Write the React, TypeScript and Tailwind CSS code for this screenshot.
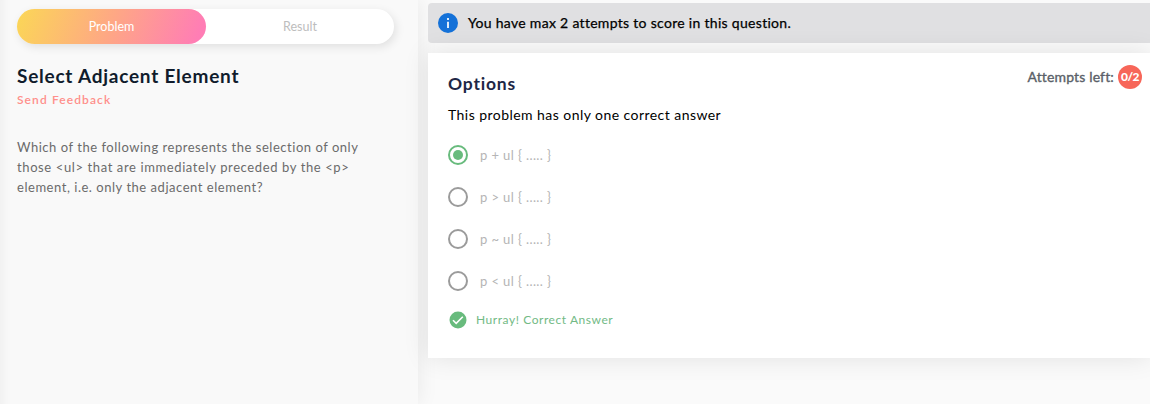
const options = ['p + ul { ..... }', 'p > ul { ..... }', 'p ~ ul { ..... }', 'p < ul { ..... }'];

function Radio({ checked }: { checked: boolean }) {
  return (
    <span
      className={`flex size-5 shrink-0 items-center justify-center rounded-full border-2 ${
        checked ? 'border-[#68bb7d]' : 'border-[#9b9b9b]'
      }`}
    >
      {checked && <span className="size-[10px] rounded-full bg-[#68bb7d]" />}
    </span>
  );
}

function ProblemPanel() {
  return (
    <section className="w-[418px] shrink-0 bg-[#f9f9f9] pl-[17px] pt-[9px] shadow-[0_0_20px_rgba(0,0,0,0.08),inset_14px_0_12px_-12px_rgba(0,0,0,0.05)]">
      <div className="flex h-[35px] w-[377px] rounded-full bg-white text-[12.5px] shadow-[2px_3px_10px_rgba(0,0,0,0.1)]">
        <button className="w-[189px] rounded-full bg-[linear-gradient(110deg,#fbd756_0%,#fea785_50%,#ff7db5_95%)] pt-[2px] text-white">
          Problem
        </button>
        <button className="w-[188px] pt-[2px] text-[#bdbdbd]">Result</button>
      </div>
      <h1 className="mt-5 text-[19px] leading-6 font-bold tracking-[0.76px] whitespace-nowrap text-[#101c2c]">
        Select Adjacent Element
      </h1>
      <a className="mt-[3px] block w-fit text-[12px] leading-[18px] font-semibold tracking-[1.1px] text-[#ff8f8b]">Send Feedback</a>
      <p className="mt-[28px] text-[13px] leading-5 tracking-[0.53px] whitespace-nowrap text-[#6b6b6b]">
        Which of the following represents the selection of only
        <br />
        <span className="tracking-[0.61px]">those &lt;ul&gt; that are immediately preceded by the &lt;p&gt;</span>
        <br />
        element, i.e. only the adjacent element?
      </p>
    </section>
  );
}

export default function App() {
  return (
    <main className="flex h-[404px] w-[1150px] overflow-hidden bg-[#fafafa] font-['Lato',sans-serif]">
      <ProblemPanel />
      <section className="min-w-0 flex-1 pl-[10px] pt-[3px]">
        <div className="flex h-10 items-center rounded-l-[4px] bg-[#e0e0e2] pl-[10px]">
          <svg className="size-5" viewBox="0 0 20 20">
            <circle cx="10" cy="10" r="10" fill="#1471d8" />
            <path d="M9 5h2v2H9zM9 8.8h2V15H9z" fill="#dcebfa" />
          </svg>
          <span className="ml-[10px] text-[14px] leading-5 tracking-[0.3px] text-black [-webkit-text-stroke:0.25px_black]">
            You have max 2 attempts to score in this question.
          </span>
        </div>
        <div className="mt-[10px] h-[305px] bg-white px-5 pt-5 shadow-[0_0_24px_rgba(0,0,0,0.1)]">
          <div className="flex justify-between">
            <h2 className="text-[17.5px] leading-[22px] font-bold tracking-[0.8px] text-[#1e2746]">Options</h2>
            <div className="-mt-2 -mr-3 flex h-6 items-center">
              <span className="pb-px text-[14px] tracking-[0.15px] text-[#5a5f68] [-webkit-text-stroke:0.35px_#5a5f68]">Attempts left:</span>
              <span className="ml-1 flex size-6 items-center justify-center rounded-full bg-[#f76659] text-[12px] font-black tracking-[-0.5px] text-white">
                0/2
              </span>
            </div>
          </div>
          <p className="mt-[10px] text-[14px] leading-5 tracking-[0.45px] text-black">This problem has only one correct answer</p>
          <ul className="mt-5 flex flex-col gap-[22px]">
            {options.map((option, i) => (
              <li key={option} className="flex h-5 items-center">
                <Radio checked={i === 0} />
                <span className="ml-3 text-[13px] leading-5 tracking-[0.4px] text-[#b5b5b5]">{option}</span>
              </li>
            ))}
          </ul>
          <div className="mt-[19px] flex h-5 items-center">
            <svg className="size-5" viewBox="0 0 20 20">
              <circle cx="10" cy="10" r="8.5" fill="#68bb7d" />
              <path d="m5 10.2 3.2 3.2 6.6-6.6" fill="none" stroke="white" strokeWidth="1.6" />
            </svg>
            <span className="ml-2 text-[12px] leading-5 tracking-[0.56px] text-[#72ba85]">Hurray! Correct Answer</span>
          </div>
        </div>
      </section>
    </main>
  );
}
